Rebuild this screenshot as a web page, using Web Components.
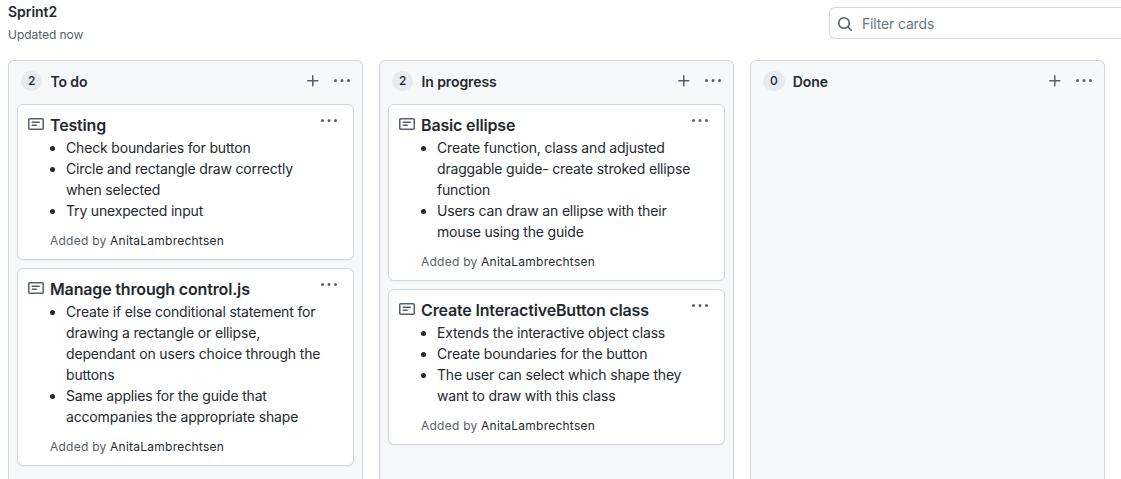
<!DOCTYPE html>
<html lang="en">
<head>
<meta charset="utf-8">
<title>Sprint2</title>
<style>
  html, body { margin: 0; height: 100%; overflow: hidden; background: #fff; }
  body { font: 14px/21px Inter, "Liberation Sans", sans-serif; color: #24292f; }
</style>
</head>
<body>
<project-board>
  <board-header slot="header" name="Sprint2" updated="Updated now" placeholder="Filter cards"></board-header>
  <board-column name="To do" count="2">
    <note-card name="Testing" author="AnitaLambrechtsen">
      <note-item>Check boundaries for button</note-item>
      <note-item>Circle and rectangle draw correctly<br>when selected</note-item>
      <note-item>Try unexpected input</note-item>
    </note-card>
    <note-card name="Manage through control.js" author="AnitaLambrechtsen">
      <note-item>Create if else conditional statement for<br>drawing a rectangle or ellipse,<br>dependant on users choice through the<br>buttons</note-item>
      <note-item>Same applies for the guide that<br>accompanies the appropriate shape</note-item>
    </note-card>
  </board-column>
  <board-column name="In progress" count="2">
    <note-card name="Basic ellipse" author="AnitaLambrechtsen">
      <note-item>Create function, class and adjusted<br>draggable guide- create stroked ellipse<br>function</note-item>
      <note-item>Users can draw an ellipse with their<br>mouse using the guide</note-item>
    </note-card>
    <note-card name="Create InteractiveButton class" author="AnitaLambrechtsen">
      <note-item>Extends the interactive object class</note-item>
      <note-item>Create boundaries for the button</note-item>
      <note-item>The user can select which shape they<br>want to draw with this class</note-item>
    </note-card>
  </board-column>
  <board-column name="Done" count="0"></board-column>
</project-board>
<script>
const ICONS = {
  search: 'M11.5 7a4.499 4.499 0 11-8.998 0A4.499 4.499 0 0111.5 7zm-.82 4.74a6 6 0 111.06-1.06l3.04 3.04a.75.75 0 11-1.06 1.06l-3.04-3.04z',
  plus: 'M7.75 2a.75.75 0 01.75.75V7h4.25a.75.75 0 110 1.5H8.5v4.25a.75.75 0 11-1.5 0V8.5H2.75a.75.75 0 010-1.5H7V2.75A.75.75 0 017.75 2z',
  kebab: 'M8 9a1.5 1.5 0 100-3 1.5 1.5 0 000 3zM1.5 9a1.5 1.5 0 100-3 1.5 1.5 0 000 3zm13 0a1.5 1.5 0 100-3 1.5 1.5 0 000 3z',
  note: 'M0 3.75C0 2.784.784 2 1.75 2h12.5c.966 0 1.75.784 1.75 1.75v8.5A1.75 1.75 0 0114.25 14H1.75A1.75 1.75 0 010 12.25v-8.5zm1.75-.25a.25.25 0 00-.25.25v8.5c0 .138.112.25.25.25h12.5a.25.25 0 00.25-.25v-8.5a.25.25 0 00-.25-.25H1.75zM3.5 6.25a.75.75 0 01.75-.75h7a.75.75 0 010 1.5h-7a.75.75 0 01-.75-.75zm.75 2.25a.75.75 0 000 1.5h4a.75.75 0 000-1.5h-4z'
};

class Base extends HTMLElement {
  connectedCallback() {
    if (!this.shadowRoot) this.attachShadow({ mode: 'open' }).innerHTML = this.render();
  }
  attr(n) { return this.getAttribute(n) || ''; }
}

customElements.define('oct-icon', class extends Base {
  render() {
    return `<style>:host{display:block;flex:none;width:16px;height:16px;color:#57606a}svg{display:block}</style>
      <svg width="16" height="16" viewBox="0 0 16 16" fill="currentColor" fill-rule="evenodd"><path d="${ICONS[this.attr('name')]}"/></svg>`;
  }
});

customElements.define('project-board', class extends Base {
  render() {
    return `<style>
      :host{display:flex;flex-direction:column;height:100vh;overflow:hidden}
      .columns{display:flex;gap:16px;padding-left:8px;flex:1;min-height:0}
    </style><slot name="header"></slot><div class="columns"><slot></slot></div>`;
  }
});

customElements.define('board-header', class extends Base {
  render() {
    return `<style>
      :host{display:flex;justify-content:space-between;height:60px;flex:none;box-sizing:border-box;padding-left:8px}
      h1{margin:1px 0 0;font-size:14px;line-height:21px;font-weight:600;letter-spacing:-.03px}
      p{margin:4px 0 0;font-size:12px;line-height:18px;color:#57606a;letter-spacing:-.04px}
      .filter{display:flex;align-items:center;gap:9px;box-sizing:border-box;width:292px;height:32px;margin-top:7px;padding-left:7px;border:1px solid #d0d7de;border-right:0;border-radius:6px 0 0 6px;color:#6e7781;letter-spacing:-.16px}
      .filter oct-icon{margin-top:1px}
    </style>
    <div><h1>${this.attr('name')}</h1><p>${this.attr('updated')}</p></div>
    <div class="filter"><oct-icon name="search"></oct-icon><span>${this.attr('placeholder')}</span></div>`;
  }
});

customElements.define('board-column', class extends Base {
  render() {
    return `<style>
      :host{display:block;box-sizing:border-box;flex:none;width:355px;border:1px solid #d0d7de;border-bottom:0;border-radius:6px 6px 0 0;background:#f6f8fa;padding:0 8px}
      header{display:flex;align-items:flex-start;height:43px;box-sizing:border-box;padding:10px 4px 0}
      .count{box-sizing:border-box;height:20px;padding:0 7px;border-radius:10px;background:#e7eaef;font-size:12px;line-height:20px;font-weight:500;text-align:center}
      h2{margin:0 0 0 8px;font-size:14px;line-height:21px;font-weight:600;flex:1;letter-spacing:-.08px}
      .actions{display:flex;gap:13px;padding-top:2px}
      .cards{display:flex;flex-direction:column;gap:8px}
    </style>
    <header><span class="count">${this.attr('count')}</span><h2>${this.attr('name')}</h2>
      <div class="actions"><oct-icon name="plus"></oct-icon><oct-icon name="kebab"></oct-icon></div></header>
    <div class="cards"><slot></slot></div>`;
  }
});

customElements.define('note-card', class extends Base {
  render() {
    return `<style>
      :host{display:flex;box-sizing:border-box;border:1px solid #d0d7de;border-radius:6px;background:#fff;padding:8px 16px 9px 10px;box-shadow:0 1px 0 rgba(27,31,36,.04)}
      .icon{margin:3px 6px 0 0}
      .body{flex:1;min-width:0}
      h3{margin:0;font-size:16px;line-height:24px;font-weight:600;white-space:nowrap;letter-spacing:-.16px}
      small{display:block;margin-top:11px;font-size:12px;line-height:18px;color:#57606a;letter-spacing:.24px}
      b{font-weight:400;color:#24292f}
    </style>
    <oct-icon class="icon" name="note"></oct-icon>
    <div class="body"><h3>${this.attr('name')}</h3><slot></slot>
      <small>Added by <b>${this.attr('author')}</b></small></div>
    <oct-icon name="kebab"></oct-icon>`;
  }
});

customElements.define('note-item', class extends Base {
  render() {
    return `<style>
      :host{display:flex;white-space:nowrap;letter-spacing:-.17px}
      i{flex:none;width:5px;height:5px;border-radius:50%;background:#24292f;margin:9px 11px 0 0}
    </style><i></i><span><slot></slot></span>`;
  }
});
</script>
</body>
</html>
